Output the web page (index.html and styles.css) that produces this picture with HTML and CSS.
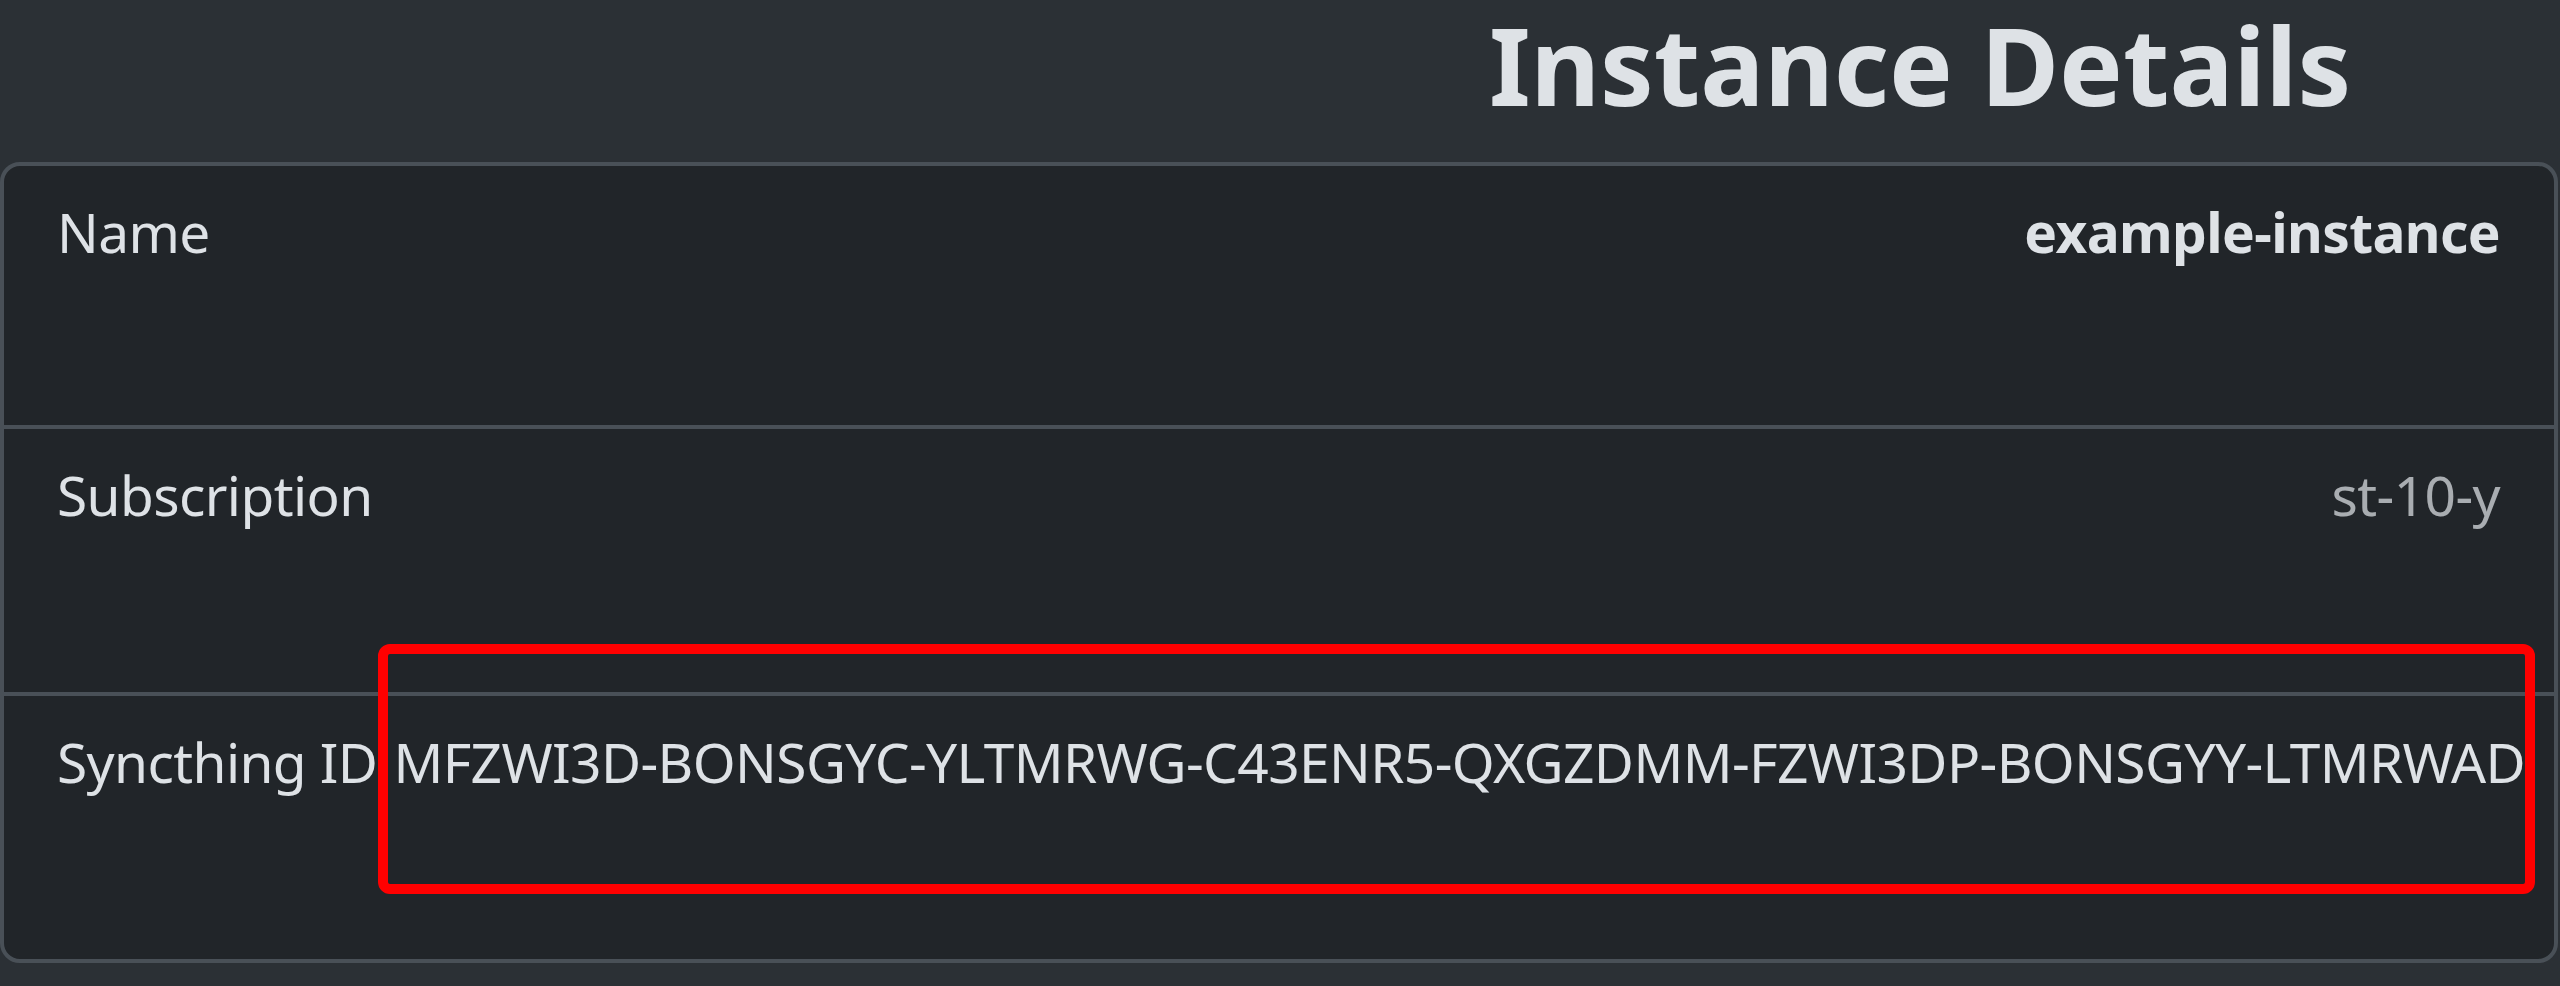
FILE: index.html
```html
<!DOCTYPE html>
<html lang="en">
<head>
    <meta charset="UTF-8">
    <meta name="viewport" content="width=device-width, initial-scale=1.0">
    <title>Instance Details</title>
    <link rel="stylesheet" href="styles.css">
</head>
<body>

    <!-- Heading sits in the right half -->
    <header class="page-head">
        <div class="head-spacer"></div>
        <h2 class="page-title">Instance Details</h2>
    </header>

    <!-- Details card -->
    <div class="card">
        <ul class="details">
            <li class="detail-row row-first">
                <span class="detail-label">Name</span>
                <span class="detail-value strong">example-instance</span>
            </li>
            <li class="detail-row">
                <span class="detail-label">Subscription</span>
                <span class="detail-value muted">st-10-y</span>
            </li>
            <li class="detail-row">
                <span class="detail-label">Syncthing ID</span>
                <span class="detail-value">MFZWI3D-BONSGYC-YLTMRWG-C43ENR5-QXGZDMM-FZWI3DP-BONSGYY-LTMRWAD</span>
                <div class="highlight"></div>
            </li>
        </ul>
    </div>

</body>
</html>
```

FILE: styles.css
```css
/* Basic Reset */
* {
    box-sizing: border-box;
    margin: 0;
    padding: 0;
}

body {
    font-family: "Noto Sans", "Open Sans", sans-serif;
    background: #2b3035;
    color: #dee2e6;
    min-height: 100vh;
}

.page-head {
    display: grid;
    grid-template-columns: 1fr 1fr;
    height: 162px;
    padding-top: 6px;
}

.page-title {
    text-align: center;
    font-size: 107px;
    font-weight: 700;
    line-height: 1.1;
    color: #dee2e6;
}

.card {
    width: 2558px;
    background: #212529;
    border: 4px solid #495057;
    border-radius: 20px;
}

.details {
    list-style: none;
}

.detail-row {
    position: relative;
    display: flex;
    justify-content: space-between;
    align-items: flex-start;
    gap: 16px;
    height: 267px;
    padding: 24px 54px 0 53px;
    border-top: 4px solid #495057;
    font-size: 55px;
    letter-spacing: -0.6px;
    line-height: 84px;
}

.detail-row.row-first {
    height: 259px;
    border-top: none;
}

.detail-label {
    flex-shrink: 0;
    white-space: nowrap;
}

.detail-value {
    flex: 1;
    min-width: 0;
    text-align: right;
    white-space: nowrap;
}

.detail-value.strong {
    font-weight: 700;
}

.detail-value.muted {
    color: rgba(222, 226, 230, 0.72);
}

/* Red annotation frame around the ID */
.highlight {
    position: absolute;
    left: 374px;
    top: -52px;
    width: 2157px;
    height: 250px;
    border: 10px solid #ff0000;
    border-radius: 12px;
    pointer-events: none;
}
```
